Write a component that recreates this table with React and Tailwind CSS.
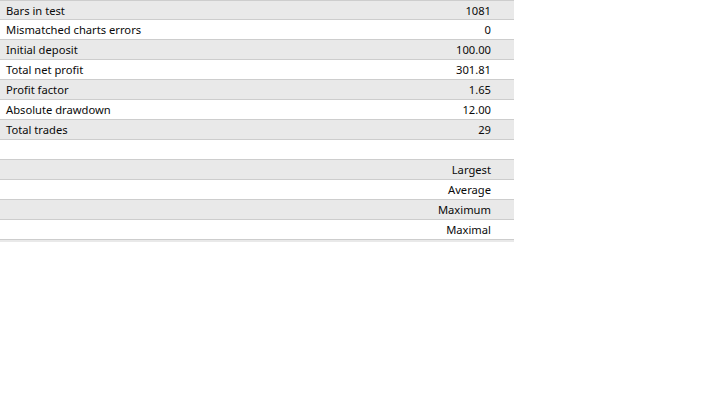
export default function App() {
  const rows = [
    ["Bars in test", "1081"],
    ["Mismatched charts errors", "0"],
    ["Initial deposit", "100.00"],
    ["Total net profit", "301.81"],
    ["Profit factor", "1.65"],
    ["Absolute drawdown", "12.00"],
    ["Total trades", "29"],
    ["", ""],
    ["", "Largest"],
    ["", "Average"],
    ["", "Maximum"],
    ["", "Maximal"],
    ["", ""],
  ];
  return (
    <div className="w-[726px] h-[417px] bg-white">
      <div
        className="w-[514px] h-[242px] overflow-hidden border-t border-[#cdcdcd] text-[11.2px] text-[#0a0a0a] leading-[19px]"
        style={{ fontFamily: '"Noto Sans", sans-serif' }}
      >
        {rows.map(([label, value], i) => (
          <div
            key={i}
            className={[
              "flex shrink-0 items-center justify-between border-b border-[#cdcdcd] pl-[6px] pr-[23px]",
              i === 0 ? "h-[19px]" : "h-[20px]",
              i % 2 === 0 ? "bg-[#e9e9e9]" : "bg-white",
            ].join(" ")}
          >
            <span>{label}</span>
            <span>{value}</span>
          </div>
        ))}
      </div>
    </div>
  );
}
